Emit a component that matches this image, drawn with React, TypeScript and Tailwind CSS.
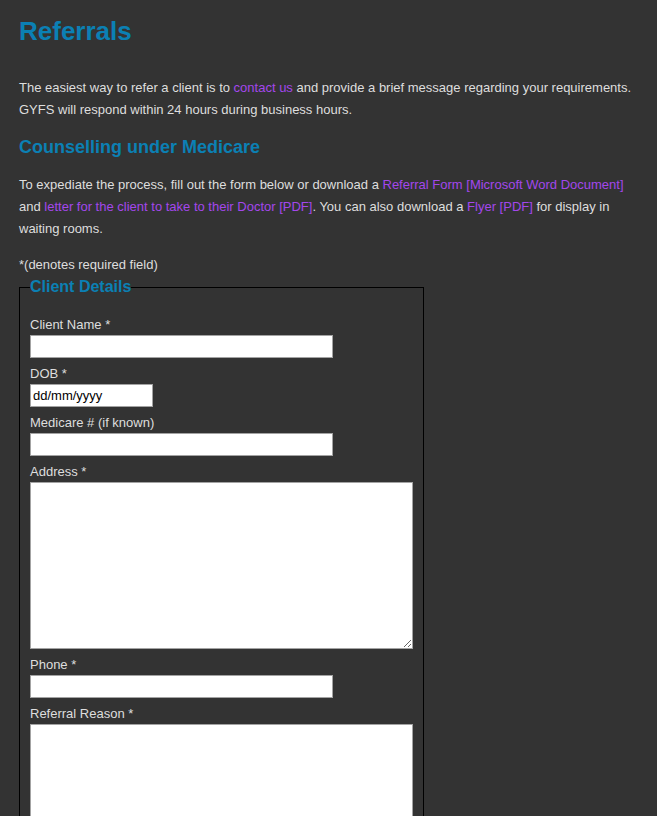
export default function App() {
  const label = "block pt-[1px] leading-[21px]";
  const input = "block h-[23px] bg-white border border-[#a3a3a3] px-[2px] text-[13px] text-black mb-[4px] outline-none";
  const area = "block w-[383px] h-[167px] bg-white border border-[#a3a3a3] mb-[4px] outline-none";
  const link = "text-[#a347ec]";

  return (
    <div className="min-h-screen bg-[#333333] px-[19px] pt-[16px] pb-10 font-['Liberation_Sans',Arial,sans-serif] text-[13px] leading-[22px] text-[#dedede]">
      <h1 className="text-[26px] leading-[30px] font-bold text-[#0b80b4]">Referrals</h1>

      <p className="mt-[31px]">
        The easiest way to refer a client is to <a className={link}>contact us</a> and provide a brief message regarding your
        requirements. GYFS will respond within 24 hours during business hours.
      </p>

      <h2 className="mt-[15px] text-[18px] leading-[22px] font-bold text-[#0b80b4]">Counselling under Medicare</h2>

      <p className="mt-[16px]">
        To expediate the process, fill out the form below or download a{" "}
        <a className={link}>Referral Form [Microsoft Word Document]</a> and{" "}
        <a className={link}>letter for the client to take to their Doctor [PDF]</a>. You can also download a{" "}
        <a className={link}>Flyer [PDF]</a> for display in waiting rooms.
      </p>

      <p className="mt-[14px]">*(denotes required field)</p>

      <fieldset className="mt-[2px] w-[405px] border border-black px-[10px] pt-[17px] pb-[12px]">
        <legend className="text-[16px] leading-[18px] font-bold text-[#0b80b4]">Client Details</legend>

        <label className={label}>Client Name *</label>
        <input className={`${input} w-[303px]`} />

        <label className={label}>DOB *</label>
        <input className={`${input} w-[123px]`} defaultValue="dd/mm/yyyy" />

        <label className={label}>Medicare # (if known)</label>
        <input className={`${input} w-[303px]`} />

        <label className={label}>Address *</label>
        <textarea className={area} />

        <label className={label}>Phone *</label>
        <input className={`${input} w-[303px]`} />

        <label className={label}>Referral Reason *</label>
        <textarea className={area} />
      </fieldset>
    </div>
  );
}
